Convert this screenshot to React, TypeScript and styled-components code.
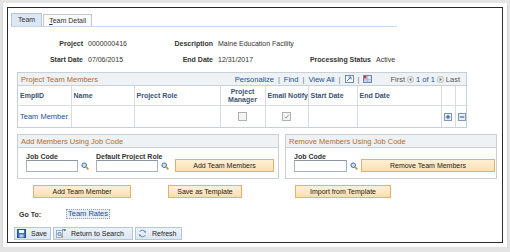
import React, { FunctionComponent } from 'react';
import styled, { createGlobalStyle } from 'styled-components';

/*
 * Styles
 */
const GlobalStyle = createGlobalStyle`
  html, body {
    margin: 0;
    padding: 0;
    background: #e4e4e4;
    font-family: "Liberation Sans", Arial, sans-serif;
    font-size: 7px;
    color: #333;
  }
`;

const Window = styled.div`
  margin: 3px 3px 0 3px;
  width: 496px;
  padding: 4px;
  background: #fff;
  box-shadow: 0 2px 2px rgba(0, 0, 0, 0.18);
`;

const Frame = styled.div`
  border: 1px solid #2b2b2b;
  box-sizing: border-box;
  height: 236px;
  display: flex;
  flex-direction: column;
`;

const TabBar = styled.div`
  display: flex;
  gap: 1px;
  margin: 5px 0 0 3px;
  width: 386px;
  border-bottom: 1px solid #c4d8ec;
  align-items: flex-end;
`;

const Tab = styled.div<{ active?: boolean }>`
  height: ${(p) => (p.active ? 12 : 11)}px;
  line-height: ${(p) => (p.active ? 12 : 11)}px;
  padding: 0 ${(p) => (p.active ? 6 : 5)}px;
  border: 1px solid ${(p) => (p.active ? '#b7c7d8' : '#c6c6c6')};
  border-bottom: none;
  background: ${(p) => (p.active ? '#dce7f3' : '#fafafa')};
  color: #333;
  font-size: 7px;
  & u { text-decoration: underline; }
`;

const Fields = styled.div`
  display: grid;
  grid-template-columns: 75px 62px 68px 92px 66px auto;
  grid-auto-rows: 16px;
  margin-top: 8px;
  align-items: center;
`;

const Label = styled.div`
  font-weight: bold;
  text-align: right;
  color: #333;
  white-space: nowrap;
`;

const Value = styled.div`
  padding-left: 5px;
  white-space: nowrap;
  color: #333;
`;

const Content = styled.div`
  padding: 5px 0 0 9px;
`;

const Box = styled.div<{ w: number }>`
  width: ${(p) => p.w}px;
  box-sizing: border-box;
  border: 1px solid #c9d1d8;
`;

const BoxHeader = styled.div`
  display: flex;
  align-items: center;
  height: 12px;
  padding: 0 6px 0 3px;
  background: #eef2f4;
  border-bottom: 1px solid #c9d1d8;
  color: #b36a2c;
  font-size: 7.5px;
`;

const NavLinks = styled.div`
  margin-left: auto;
  display: flex;
  align-items: center;
  gap: 2px;
  color: #1c4f96;
  font-size: 7.5px;
`;

const Sep = styled.span`
  color: #6a7c90;
  margin: 0 2px;
`;

const Pager = styled.div`
  display: flex;
  align-items: center;
  gap: 2px;
  margin-left: 18px;
  color: #555;
  font-size: 7.5px;
  & b { font-weight: normal; color: #1c4f96; }
`;

const Table = styled.table`
  border-collapse: collapse;
  width: 100%;
  table-layout: fixed;
`;

const Th = styled.th<{ center?: boolean }>`
  height: 19px;
  padding: 0 2px;
  font-weight: bold;
  color: #3c5272;
  white-space: nowrap;
  overflow: hidden;
  text-align: ${(p) => (p.center ? 'center' : 'left')};
  border-left: 1px solid #d6dce2;
  border-bottom: 1px solid #d6dce2;
  line-height: 8px;
  &:first-child { border-left: none; }
`;

const Td = styled.td<{ center?: boolean }>`
  height: 21px;
  padding: 0 2px;
  text-align: ${(p) => (p.center ? 'center' : 'left')};
  border-left: 1px solid #d6dce2;
  color: #1c4f96;
  font-size: 7.5px;
  white-space: nowrap;
  &:first-child { border-left: none; }
`;

const CheckBox = styled.span`
  display: inline-block;
  width: 7px;
  height: 7px;
  border: 1px solid #b0b0b0;
  background: #f4f4f4;
  vertical-align: middle;
  position: relative;
`;

const RowBtn = styled.span`
  display: inline-flex;
  align-items: center;
  justify-content: center;
  width: 6px;
  height: 6px;
  border: 1px solid #7f98b5;
  background: #e6edf5;
  vertical-align: middle;
`;

const JobRow = styled.div`
  display: flex;
  gap: 6px;
  margin-top: 6px;
`;

const JobBody = styled.div<{ cols: string }>`
  display: grid;
  grid-template-columns: ${(p) => p.cols};
  grid-template-rows: 9px 12px;
  padding: 3px 0 6px 8px;
  align-items: end;
`;

const FieldLabel = styled.div`
  font-weight: bold;
  color: #333;
  white-space: nowrap;
`;

const InputWrap = styled.div`
  display: flex;
  align-items: center;
  gap: 3px;
`;

const Input = styled.div<{ w: number }>`
  width: ${(p) => p.w}px;
  height: 10px;
  border: 1px solid #aab3bc;
  border-top-color: #8e979f;
  background: #fff;
`;

const OrangeButton = styled.div<{ w: number }>`
  width: ${(p) => p.w}px;
  height: 11px;
  line-height: 11px;
  box-sizing: content-box;
  border: 1px solid #e2b06f;
  background: linear-gradient(#fff0d6, #fbdfb0);
  text-align: center;
  color: #222;
  font-size: 7px;
  white-space: nowrap;
`;

const ButtonRow = styled.div`
  display: grid;
  grid-template-columns: 135px 127px auto;
  margin: 6px 0 0 16px;
`;

const GoToRow = styled.div`
  display: flex;
  align-items: center;
  margin: 11px 0 0 2px;
`;

const GoToLabel = styled.span`
  font-weight: bold;
  width: 47px;
`;

const GoToLink = styled.span`
  padding: 0 1px;
  height: 8px;
  line-height: 8px;
  border: 1px dotted #9aa4ae;
  background: #e7edf3;
  color: #1c4f96;
  font-size: 7.5px;
`;

const Toolbar = styled.div`
  display: flex;
  gap: 2px;
  margin: auto 0 2px 6px;
`;

const ToolButton = styled.div<{ w: number }>`
  width: ${(p) => p.w}px;
  height: 11px;
  box-sizing: content-box;
  display: flex;
  align-items: center;
  gap: 5px;
  padding: 0 0 0 2px;
  border: 1px solid #b5c7d9;
  background: linear-gradient(#eef3f8, #dbe6f1);
  color: #222;
  font-size: 7px;
  white-space: nowrap;
`;

/*
 * Icons
 */
const Lookup = () => (
  <svg width="8" height="8" viewBox="0 0 8 8">
    <circle cx="3.2" cy="3.2" r="2.3" fill="#cfe0f4" stroke="#3d6fae" strokeWidth="1" />
    <line x1="4.9" y1="4.9" x2="7.4" y2="7.4" stroke="#c9922c" strokeWidth="1.6" />
  </svg>
);

const ZoomIcon = () => (
  <svg width="9" height="8" viewBox="0 0 9 8">
    <rect x="0.5" y="0.5" width="8" height="7" fill="#fff" stroke="#6f89a8" />
    <path d="M2 6 L6 2 M3.5 2 H6 V4.5" stroke="#3d6fae" fill="none" strokeWidth="0.9" />
  </svg>
);

const SheetIcon = () => (
  <svg width="9" height="8" viewBox="0 0 9 8">
    <rect x="0.5" y="0.5" width="8" height="7" fill="#dbe5f0" stroke="#6f89a8" />
    <rect x="1" y="1" width="2.5" height="2.5" fill="#d23b3b" />
    <path d="M1 4.5 H8 M1 6 H8 M4.5 1 V7.5" stroke="#8aa1bb" strokeWidth="0.5" />
  </svg>
);

const PageArrow: FunctionComponent<{ dir: 'left' | 'right' }> = ({ dir }) => (
  <svg width="7" height="7" viewBox="0 0 7 7">
    <circle cx="3.5" cy="3.5" r="3.2" fill="#e9e9e9" stroke="#a9a9a9" strokeWidth="0.6" />
    {dir === 'left'
      ? <path d="M4.4 1.8 L2.2 3.5 L4.4 5.2 Z" fill="#777" />
      : <path d="M2.6 1.8 L4.8 3.5 L2.6 5.2 Z" fill="#777" />}
  </svg>
);

const CheckMark = () => (
  <svg width="7" height="7" viewBox="0 0 7 7" style={{ position: 'absolute', left: 0, top: 0 }}>
    <path d="M1.5 3.6 L3 5.2 L5.8 1.6" stroke="#9a9a9a" fill="none" strokeWidth="0.9" />
  </svg>
);

const SaveIcon = () => (
  <svg width="9" height="9" viewBox="0 0 9 9">
    <rect x="0.5" y="0.5" width="8" height="8" fill="#3f78c4" stroke="#24508c" />
    <rect x="2" y="1" width="5" height="3" fill="#fff" />
    <rect x="2.5" y="5.5" width="4" height="3" fill="#b9cde6" />
  </svg>
);

const ReturnIcon = () => (
  <svg width="10" height="9" viewBox="0 0 10 9">
    <rect x="0.5" y="1.5" width="6" height="7" fill="#f4f6f9" stroke="#7f93aa" strokeWidth="0.7" />
    <circle cx="3.5" cy="5" r="1.7" fill="#cfe0f4" stroke="#3d6fae" strokeWidth="0.8" />
    <path d="M6 0.8 L9.5 0.8 M8 -0.4 L9.6 0.8 L8 2" stroke="#2e6bb8" fill="none" strokeWidth="0.9" />
    <path d="M5 6.5 L6.8 8.3" stroke="#c9922c" strokeWidth="1.2" />
  </svg>
);

const RefreshIcon = () => (
  <svg width="9" height="9" viewBox="0 0 9 9">
    <path d="M7.4 3.4 A3.1 3.1 0 0 0 1.6 3" stroke="#6c8bb0" fill="none" strokeWidth="1" />
    <path d="M1.6 5.6 A3.1 3.1 0 0 0 7.4 6" stroke="#6c8bb0" fill="none" strokeWidth="1" />
    <path d="M7.9 1.4 L7.6 3.8 L5.4 3 Z" fill="#6c8bb0" />
    <path d="M1.1 7.6 L1.4 5.2 L3.6 6 Z" fill="#6c8bb0" />
  </svg>
);

/*
 * Components
 */
const TeamGrid = () => (
  <Box w={450}>
    <BoxHeader>
      Project Team Members
      <NavLinks>
        <span>Personalize</span><Sep>|</Sep>
        <span>Find</span><Sep>|</Sep>
        <span>View All</span><Sep>|</Sep>
        <ZoomIcon /><Sep>|</Sep>
        <SheetIcon />
      </NavLinks>
      <Pager>
        First <PageArrow dir="left" /> <b>1 of 1</b> <PageArrow dir="right" /> Last
      </Pager>
    </BoxHeader>
    <Table>
      <colgroup>
        <col style={{ width: 53 }} />
        <col style={{ width: 63 }} />
        <col style={{ width: 86 }} />
        <col style={{ width: 45 }} />
        <col style={{ width: 43 }} />
        <col style={{ width: 49 }} />
        <col style={{ width: 84 }} />
        <col style={{ width: 14 }} />
        <col style={{ width: 13 }} />
      </colgroup>
      <thead>
        <tr>
          <Th>EmplID</Th>
          <Th>Name</Th>
          <Th>Project Role</Th>
          <Th center>Project<br />Manager</Th>
          <Th center>Email Notify</Th>
          <Th>Start Date</Th>
          <Th>End Date</Th>
          <Th />
          <Th />
        </tr>
      </thead>
      <tbody>
        <tr>
          <Td>Team Member</Td>
          <Td />
          <Td />
          <Td center><CheckBox /></Td>
          <Td center><CheckBox><CheckMark /></CheckBox></Td>
          <Td />
          <Td />
          <Td center>
            <RowBtn>
              <svg width="6" height="6" viewBox="0 0 6 6"><path d="M3 0.8 V5.2 M0.8 3 H5.2" stroke="#1f4f8f" strokeWidth="1" /></svg>
            </RowBtn>
          </Td>
          <Td center>
            <RowBtn>
              <svg width="6" height="6" viewBox="0 0 6 6"><path d="M0.8 3 H5.2" stroke="#1f4f8f" strokeWidth="1" /></svg>
            </RowBtn>
          </Td>
        </tr>
      </tbody>
    </Table>
  </Box>
);

export default function App() {
  return (
    <>
      <GlobalStyle />
      <Window>
        <Frame>
          <TabBar>
            <Tab active>Team</Tab>
            <Tab><u>T</u>eam Detail</Tab>
          </TabBar>
          <Fields>
            <Label>Project</Label>
            <Value>0000000416</Value>
            <Label>Description</Label>
            <Value>Maine Education Facility</Value>
            <div />
            <div />
            <Label>Start Date</Label>
            <Value>07/06/2015</Value>
            <Label>End Date</Label>
            <Value>12/31/2017</Value>
            <Label>Processing Status</Label>
            <Value>Active</Value>
          </Fields>
          <Content>
            <TeamGrid />
            <JobRow>
              <Box w={262}>
                <BoxHeader>Add Members Using Job Code</BoxHeader>
                <JobBody cols="70px 79px auto">
                  <FieldLabel>Job Code</FieldLabel>
                  <FieldLabel>Default Project Role</FieldLabel>
                  <div />
                  <InputWrap><Input w={50} /><Lookup /></InputWrap>
                  <InputWrap><Input w={60} /><Lookup /></InputWrap>
                  <OrangeButton w={97}>Add Team Members</OrangeButton>
                </JobBody>
              </Box>
              <Box w={212}>
                <BoxHeader>Remove Members Using Job Code</BoxHeader>
                <JobBody cols="67px auto">
                  <FieldLabel>Job Code</FieldLabel>
                  <div />
                  <InputWrap><Input w={51} /><Lookup /></InputWrap>
                  <OrangeButton w={132}>Remove Team Members</OrangeButton>
                </JobBody>
              </Box>
            </JobRow>
            <ButtonRow>
              <OrangeButton w={96}>Add Team Member</OrangeButton>
              <OrangeButton w={72}>Save as Template</OrangeButton>
              <OrangeButton w={94}>Import from Template</OrangeButton>
            </ButtonRow>
            <GoToRow>
              <GoToLabel>Go To:</GoToLabel>
              <GoToLink>Team Rates</GoToLink>
            </GoToRow>
          </Content>
          <Toolbar>
            <ToolButton w={33}><SaveIcon />Save</ToolButton>
            <ToolButton w={76}><ReturnIcon />Return to Search</ToolButton>
            <ToolButton w={43}><RefreshIcon />Refresh</ToolButton>
          </Toolbar>
        </Frame>
      </Window>
    </>
  );
}
